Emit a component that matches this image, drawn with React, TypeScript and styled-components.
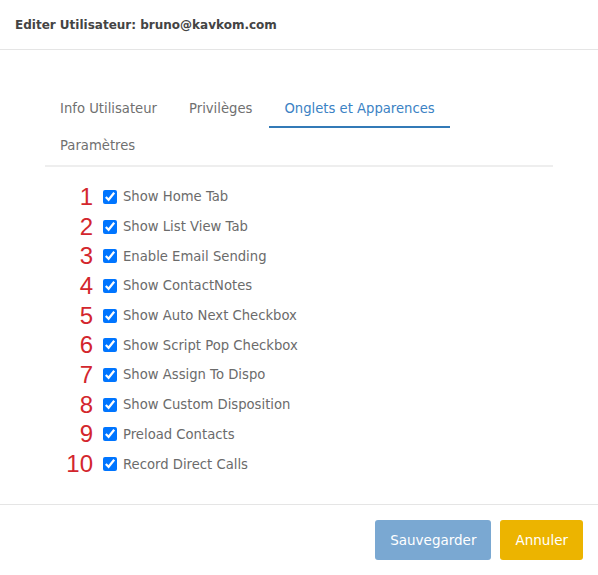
import { FC } from "react";
import styled, { createGlobalStyle } from "styled-components";

const GlobalStyle = createGlobalStyle`
  html, body {
    margin: 0;
    padding: 0;
    background: #fff;
  }
  body {
    font-family: "DejaVu Sans", "Noto Sans", sans-serif;
  }
`;

const TABS = ["Info Utilisateur", "Privilèges", "Onglets et Apparences", "Paramètres"];
const ACTIVE_TAB = 2;

const OPTIONS = [
  "Show Home Tab",
  "Show List View Tab",
  "Enable Email Sending",
  "Show ContactNotes",
  "Show Auto Next Checkbox",
  "Show Script Pop Checkbox",
  "Show Assign To Dispo",
  "Show Custom Disposition",
  "Preload Contacts",
  "Record Direct Calls",
];

const App: FC = () => {
  return (
    <Modal>
      <GlobalStyle />
      <Header>
        <Title>Editer Utilisateur: bruno@kavkom.com</Title>
      </Header>
      <Body>
        <Tabs>
          {TABS.map((t, i) => (
            <Tab key={t} $active={i === ACTIVE_TAB}>
              {t}
            </Tab>
          ))}
        </Tabs>
        <List>
          {OPTIONS.map((label, i) => (
            <Row key={label}>
              <Num>{i + 1}</Num>
              <Check type="checkbox" defaultChecked />
              <Label>{label}</Label>
            </Row>
          ))}
        </List>
      </Body>
      <Footer>
        <Button $color="#7aa8d2">Sauvegarder</Button>
        <Button $color="#ecb400">Annuler</Button>
      </Footer>
    </Modal>
  );
};

export default App;

const Modal = styled.div`
  width: 598px;
  height: 575px;
  display: flex;
  flex-direction: column;
  background: #fff;
`;

const Header = styled.div`
  height: 49px;
  display: flex;
  align-items: center;
  padding: 0 15px;
  border-bottom: 1px solid #e5e5e5;
`;

const Title = styled.div`
  font-size: 12px;
  font-weight: 700;
  color: #444;
`;

const Body = styled.div`
  padding: 41px 45px 0;
  flex: 1;
`;

const Tabs = styled.div`
  display: flex;
  flex-wrap: wrap;
  width: 508px;
  border-bottom: 2px solid #eee;
`;

const Tab = styled.div<{ $active?: boolean }>`
  height: 37px;
  box-sizing: border-box;
  padding: 0 15px;
  margin-right: 2px;
  display: flex;
  align-items: center;
  font-size: 13.2px;
  color: ${(p) => (p.$active ? "#3b82c4" : "#707070")};
  border-bottom: 2px solid ${(p) => (p.$active ? "#337ab7" : "transparent")};
`;

const List = styled.div`
  display: flex;
  flex-direction: column;
  padding-top: 15px;
`;

const Row = styled.div`
  height: 29.7px;
  display: flex;
  align-items: center;
`;

const Num = styled.span`
  width: 48px;
  text-align: right;
  font-family: "Liberation Sans", Arial, sans-serif;
  font-size: 24px;
  color: #d3262d;
  margin-right: 10px;
`;

const Check = styled.input`
  width: 14px;
  height: 14px;
  margin: 0 6px 0 0;
`;

const Label = styled.span`
  font-size: 13.2px;
  color: #6b6b6b;
`;

const Footer = styled.div`
  box-sizing: border-box;
  border-top: 1px solid #e5e5e5;
  height: 71px;
  display: flex;
  align-items: flex-start;
  justify-content: flex-end;
  gap: 9px;
  padding: 15px 15px 0;
`;

const Button = styled.button<{ $color: string }>`
  height: 40px;
  padding: 0 15px;
  border: none;
  border-radius: 3px;
  background: ${(p) => p.$color};
  color: #fff;
  font-family: inherit;
  font-size: 13.5px;
`;
